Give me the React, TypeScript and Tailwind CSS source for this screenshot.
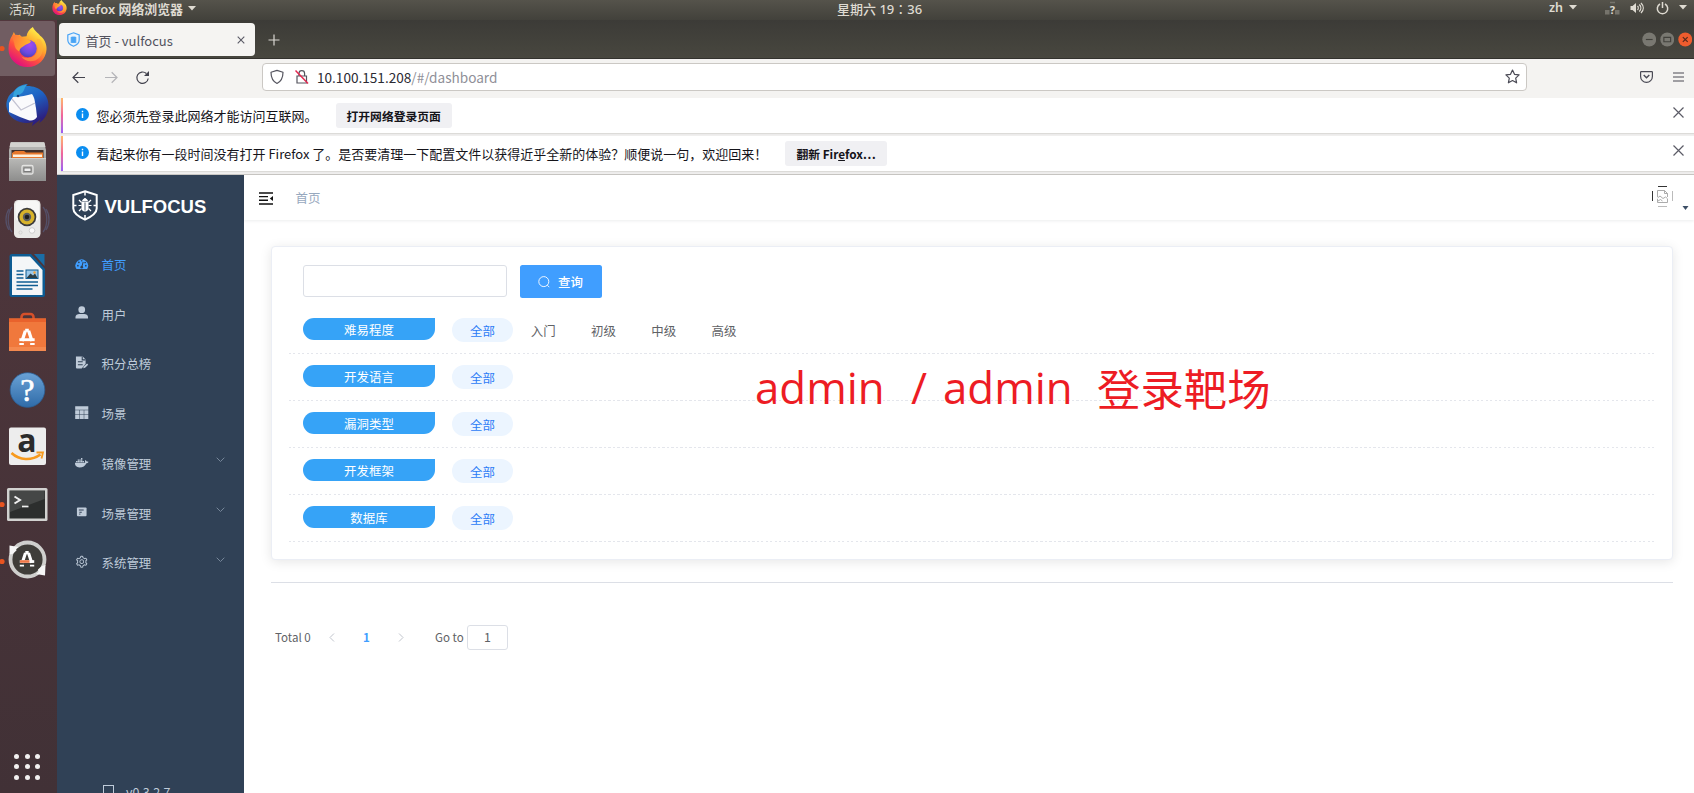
import React from "react";
import { FaDocker } from "react-icons/fa";
import { AiOutlineSetting } from "react-icons/ai";

const CJK = "font-['Noto_Sans_CJK_SC',sans-serif]";

function Caret({ className = "" }: { className?: string }) {
  return (
    <svg width="8" height="5" viewBox="0 0 8 5" className={className}>
      <path d="M0 0h8L4 4.6z" fill="currentColor" />
    </svg>
  );
}

function FirefoxMark({ size, id }: { size: number; id: string }) {
  return (
    <svg width={size} height={size} viewBox="0 0 40 41">
      <defs>
        <linearGradient id={id + "a"} x1="0.8" y1="0.1" x2="0.25" y2="0.95">
          <stop offset="0" stopColor="#fff04a" />
          <stop offset="0.35" stopColor="#ffa62b" />
          <stop offset="0.65" stopColor="#ff4f3e" />
          <stop offset="1" stopColor="#e0107e" />
        </linearGradient>
        <radialGradient id={id + "b"} cx="0.6" cy="0.3" r="0.8">
          <stop offset="0" stopColor="#a44af0" />
          <stop offset="0.6" stopColor="#6a4be0" />
          <stop offset="1" stopColor="#4a3aa8" />
        </radialGradient>
        <linearGradient id={id + "c"} x1="0" y1="0" x2="1" y2="0.3">
          <stop offset="0" stopColor="#ff7139" />
          <stop offset="1" stopColor="#ffb52b" />
        </linearGradient>
      </defs>
      <path d="M25.500 0c2 4.500 5 5.500 7.500 9 3.500 2 7 8.500 6.500 14C39 33 31 41 20 41 9 41 .5 33 .5 22.500.5 17 2 12 4.500 8.500L6 5l2 4 4-1 2 2 5-.5C19.500 5.500 22 2 25.500 0z" fill={"url(#" + id + "a)"} />
      <circle cx="20.500" cy="22" r="9" fill={"url(#" + id + "b)"} />
      <path d="M4 9c4-2 8-1 11 2 3 1.500 6 1 8.500 3.500-1 2.500-4 2.500-6 4-2 2-5.500 3-6 6.500-3-1-5-5-5-8z" fill={"url(#" + id + "c)"} />
      <path d="M29 12c3 6 3 13-1.500 17-4 3.500-10 3.500-14 1 4 6 13 7 18.500 1.500 5-5 5-14 1-19z" fill="#ffb03a" opacity=".55" />
    </svg>
  );
}

function LogoA({ x, y, s }: { x: number; y: number; s: number }) {
  return (
    <g transform={`translate(${x} ${y}) scale(${s})`} stroke="#fff" fill="none">
      <path d="M-2-7.500h4M-1.800-7-5.500 4.500M1.800-7 5.500 4.500" strokeWidth="3.600" />
      <path d="M-8.500 3H8.500" strokeWidth="3.200" />
      <path d="M-8.500 7.800h5M3.500 7.800h5" strokeWidth="2" />
    </g>
  );
}

function Tile({ children, active, dot }: { children: React.ReactNode; active?: boolean; dot?: boolean }) {
  return (
    <div className="h-[57px] w-[57px] shrink-0">
      <svg width="57" height="57" viewBox="0 0 57 57">
        {active && <rect x="-4" y="1" width="59" height="55" rx="3" fill="#715d62" />}
        {dot && <circle cx="2" cy="28.500" r="2.600" fill="#e95420" />}
        {children}
      </svg>
    </div>
  );
}

function Launcher() {
  return (
    <aside className="flex w-[57px] shrink-0 flex-col bg-linear-to-b from-[#52373d] to-[#413136]">
      <Tile active dot>
        <g transform="translate(7.500 7)"><FirefoxMark size={40} id="dock" /></g>
      </Tile>
      <Tile>
        <defs>
          <linearGradient id="tb" x1="0" y1="0" x2="0.5" y2="1">
            <stop offset="0" stopColor="#2b8fd6" />
            <stop offset="0.5" stopColor="#1e63c4" />
            <stop offset="1" stopColor="#2c1f80" />
          </linearGradient>
        </defs>
        <path d="M14 14c4-5 9-7 14-7l-3 2c14-1 23.500 8 23.500 19 0 9-4.500 15-9.500 18l2-4-9 7 1-4c-10 3-23-1-26-13-2-7 1-14 7-18z" fill="url(#tb)" />
        <path d="M14 15c3-5 8-7 13-7-3 2-2 5-5 8-3 2-6 3-8 7-1-3-1-5 0-8z" fill="#36a3dc" />
        <path d="M9 26l4-6c8 0 14-2 19-3 3 4 3 9 4 14l1 9c-3 4-6 4-9 3l-8-3-11-5z" fill="#fafafc" />
        <path d="m12 22 9 11 14-7" fill="none" stroke="#c3c3d2" strokeWidth="1.200" />
        <circle cx="18" cy="19" r="1.300" fill="#173a73" />
      </Tile>
      <Tile>
        <defs>
          <linearGradient id="fl" x1="0" y1="0" x2="0" y2="1">
            <stop offset="0" stopColor="#b9b9b7" />
            <stop offset="1" stopColor="#8f8f8e" />
          </linearGradient>
        </defs>
        <path d="M11 8h33l2 8v31H9V16z" fill="url(#fl)" />
        <path d="M10.500 8.500h34l1 4.500h-36z" fill="#d3d3d0" />
        <path d="M11.500 16h32v9h-32z" fill="#43302a" />
        <path d="M12 19l3-2h9l2 1.500h17V25H12z" fill="#e8782c" />
        <path d="M13 20.500h29V23H13z" fill="#fff0dc" />
        <path d="M9 24h37v22H9z" fill="url(#fl)" />
        <path d="M9 24.500h37" stroke="#cfcfcd" />
        <rect x="22" y="31.500" width="11" height="8.500" rx="1.500" fill="#a7a7a5" stroke="#e4e4e2" strokeWidth="1.300" />
        <rect x="24" y="34" width="7" height="3.500" fill="#eee" stroke="#666" strokeWidth=".8" />
      </Tile>
      <Tile>
        <g fill="none" stroke="#5c6a94" strokeWidth="1.300" opacity=".5">
          <path d="M12 16c-5 6-5 19 0 25M9 18c-4 6-4 15 0 21M43 16c5 6 5 19 0 25M46 18c4 6 4 15 0 21" />
        </g>
        <rect x="14" y="9" width="26.500" height="38" rx="4.500" fill="#e9e9e7" />
        <rect x="15.500" y="10" width="23.500" height="20" rx="4" fill="#f7f7f6" />
        <circle cx="27" cy="26" r="9.300" fill="#3b3b3b" />
        <circle cx="27" cy="26" r="7.600" fill="#d8b32a" />
        <circle cx="27" cy="26" r="4.200" fill="#5d5f63" />
        <circle cx="27" cy="26" r="2.300" fill="#202020" />
        <circle cx="32" cy="39.500" r="2.800" fill="#fafafa" stroke="#c5c5c5" strokeWidth=".8" />
        <circle cx="20.500" cy="41.500" r="1.600" fill="none" stroke="#ccc" strokeWidth=".7" />
      </Tile>
      <Tile>
        <path d="M12 6h19l14 15v26a2 2 0 0 1-2 2H11.500a2 2 0 0 1-2-2V8.500A2.500 2.500 0 0 1 12 6z" fill="#0d5c93" />
        <path d="M12 8.500h18L42.500 22v25H12z" fill="#f4f6f8" />
        <path d="M34 6h10.500v12z" fill="#1a6da6" />
        <path d="M16.500 23h7M16.500 26.500h7M16.500 30h7M16.500 34h21.500M16.500 37.500h21.500M16.500 41h16" stroke="#0f5d92" strokeWidth="1.700" />
        <rect x="26" y="22" width="12" height="8.500" fill="#9cc9ea" stroke="#0f5d92" />
        <path d="m26.500 30 4-4.500 2.500 2 2-2 2.500 4.500z" fill="#2c3e46" />
        <circle cx="34.500" cy="24.500" r="1.200" fill="#f2a33a" />
      </Tile>
      <Tile>
        <path d="M21.500 16v-4a3 3 0 0 1 3-3h6a3 3 0 0 1 3 3v4" fill="none" stroke="#d6502a" strokeWidth="2.600" />
        <path d="M9 13.500h37V46H9z" fill="#f0783c" />
        <path d="M9 13.500h37v3.500H9z" fill="#e9622c" />
        <path d="M9 42h37v4H9z" fill="#f4894f" />
        <LogoA x={27} y={32} s={0.9} />
      </Tile>
      <Tile>
        <defs>
          <linearGradient id="hp" x1="0" y1="0" x2="0" y2="1">
            <stop offset="0" stopColor="#6aa2d6" />
            <stop offset="1" stopColor="#2f6ba8" />
          </linearGradient>
        </defs>
        <circle cx="27.500" cy="28" r="17.300" fill="url(#hp)" stroke="#2c5f95" strokeWidth=".8" />
        <text x="27.300" y="39" textAnchor="middle" fontSize="32" fill="#fff" stroke="#fff" strokeWidth=".6" className="font-['Liberation_Serif',serif]">?</text>
      </Tile>
      <Tile>
        <rect x="9" y="8.500" width="37" height="37.500" rx="2" fill="#ededed" />
        <text x="27" y="33" textAnchor="middle" fontSize="32" fontWeight="700" fill="#2b2b2b" className="font-['Open_Sans',sans-serif]">a</text>
        <path d="M11.500 34c8 7.500 20 8 29 1.500" fill="none" stroke="#f79a1d" strokeWidth="2.600" />
        <path d="M36.500 33.500h6.500l-1.500 6" fill="none" stroke="#f79a1d" strokeWidth="1.800" />
      </Tile>
      <Tile dot>
        <rect x="7" y="12" width="40.500" height="33" rx="1.500" fill="#d2d2d0" />
        <rect x="9.500" y="14.500" width="35.500" height="28" fill="#2c2e2d" />
        <path d="M10 15h34.500v8L10 36z" fill="#454746" />
        <path d="m14.500 20.500 5.500 3.500-5.500 3.500" fill="none" stroke="#f0f0f0" strokeWidth="2" />
        <path d="M22 30.500h6.500" stroke="#f0f0f0" strokeWidth="1.700" />
      </Tile>
      <Tile dot>
        <circle cx="27.500" cy="26.500" r="17" fill="#3f3d39" stroke="#cfcfcd" strokeWidth="3.800" />
        <path d="m9.500 12.500 9 1.500-2.500 2 .5 1.500-4 3.500-3 .5z" fill="#f6f6f6" />
        <path d="m45.500 32-.5 10.500-9-1.500 2.500-2-.5-2.500 4-3.500z" fill="#f6f6f6" />
        <LogoA x={27} y={26} s={0.85} />
        <path d="M20 28.500h9.500" stroke="#f07746" strokeWidth="2.600" />
      </Tile>
      <div className="mt-auto grid grid-cols-[5px_5px_5px] gap-[5.600px] pb-[13px] pl-[14px]">
        {Array.from({ length: 9 }, (_, i) => (
          <span key={i} className="size-[5px] rounded-full bg-[#f2f0f0]" />
        ))}
      </div>
    </aside>
  );
}

function TopBar() {
  return (
    <header className="flex h-[20px] shrink-0 items-center bg-linear-to-b from-[#55534b] to-[#42413b] font-['Noto_Sans','Noto_Sans_CJK_SC',sans-serif] text-[13px] leading-[18px] text-[#dfdbd2]">
      <div className="flex w-[837px] items-center pb-[3px] pl-[9px]">
        <span className="w-[43px]">活动</span>
        <span className="pb-[2px]"><FirefoxMark size={15} id="top" /></span>
        <span className="ml-[5px] text-[12.900px] font-semibold">Firefox 网络浏览器</span>
        <Caret className="ml-[5px]" />
      </div>
      <span className="pb-[3px] font-medium">星期六 19∶36</span>
      <div className="ml-auto flex items-center pr-[2px] pb-[5px]">
        <span className="text-[12.500px] font-semibold">zh</span>
        <Caret className="ml-[6px]" />
        <svg width="15" height="15" viewBox="0 0 15 15" className="ml-[28px]">
          <path d="M0 10h4.500v4.500H0zM10 10h4.500v4.500H10z" fill="#76746c" />
          <path d="M5 2.500h5" stroke="#76746c" strokeWidth="1.500" />
          <text x="7.300" y="13.500" textAnchor="middle" fontSize="11" fontWeight="700" fill="#dfdbd2">?</text>
        </svg>
        <svg width="14" height="14" viewBox="0 0 14 14" className="ml-[10px]" fill="none" stroke="#dfdbd2" strokeWidth="1.300">
          <path d="M.5 5h2L6 2v10L2.500 9h-2z" fill="#dfdbd2" stroke="none" />
          <path d="M7.500 5c1 1 1 3 0 4M9.300 3.500c2 2 2 5 0 7M11 2c3 3 3 7 0 10" />
        </svg>
        <svg width="13" height="14" viewBox="0 0 13 14" className="ml-[12px]" fill="none" stroke="#dfdbd2" strokeWidth="1.500">
          <path d="M4 3a5.200 5.200 0 1 0 5 0M6.500 1v6" />
        </svg>
        <Caret className="mr-[5px] ml-[10px]" />
      </div>
    </header>
  );
}

function TabStrip() {
  return (
    <div className="flex h-[39px] shrink-0 items-start border-b border-[#33322e] bg-linear-to-b from-[#3c3b37] to-[#48473f]">
      <div className={"mt-[3px] ml-[2px] flex h-[33px] w-[196px] items-center rounded-[4px] bg-[#f5f4f2] pl-[8px] text-[13px] text-[#52525e] " + CJK}>
        <svg width="13" height="15" viewBox="0 0 13 15">
          <path d="M6.500.8 12.200 3v5c0 3-2.500 5-5.700 6.300C3.300 13 .8 11 .8 8V3z" fill="#e8f3fd" stroke="#4aa4f5" strokeWidth="1.200" />
          <path d="M4.500 5h4v5.500h-4zM3.300 6h6.400M3.300 8h6.400M3.300 10h6.400" fill="#4aa4f5" stroke="#4aa4f5" strokeWidth=".8" />
        </svg>
        <span className="ml-[5.500px] pt-[2px] leading-[20px]">首页 - vulfocus</span>
        <svg width="8" height="8" viewBox="0 0 8 8" className="mr-[10px] ml-auto" stroke="#5b5b66" strokeWidth="1.100"><path d="m.7.7 6.600 6.600M7.300.7.700 7.300" /></svg>
      </div>
      <svg width="12" height="12" viewBox="0 0 12 12" className="mt-[14px] ml-[13px]" stroke="#dad8d2" strokeWidth="1.200"><path d="M6 .5v11M.5 6h11" /></svg>
      <div className="mt-[12px] mr-[2px] ml-auto flex gap-[3.500px]">
        <svg width="14.500" height="15" viewBox="0 0 15 15"><circle cx="7.500" cy="7.500" r="7.200" fill="#797871" /><path d="M4 7.500h7" stroke="#42413c" strokeWidth="1.200" /></svg>
        <svg width="14.500" height="15" viewBox="0 0 15 15"><circle cx="7.500" cy="7.500" r="7.200" fill="#797871" /><path d="M4 5.300h7v4.500H4z" fill="none" stroke="#42413c" strokeWidth="1.200" /></svg>
        <svg width="14.500" height="15" viewBox="0 0 15 15"><circle cx="7.500" cy="7.500" r="7.200" fill="#ee5c2e" /><path d="m5 5 5 5m0-5-5 5" stroke="#55291c" strokeWidth="1.200" /></svg>
      </div>
    </div>
  );
}

function AddressBar() {
  return (
    <div className="flex h-[39px] shrink-0 items-center bg-[#f4f3f1] pb-[4px] text-[#4a4a55]">
      <svg width="80" height="16" viewBox="0 0 80 16" className="ml-[15px]" fill="none" stroke="#42424d" strokeWidth="1.200">
        <path d="M13 8.500H1M6.300 3.300 1 8.500l5.300 5.200" />
        <path d="M33 8.500h12M39.700 3.300 45 8.500l-5.300 5.200" stroke="#b4b4b8" />
        <path d="M76.200 9.500a5.700 5.700 0 1 1-1.800-5" />
        <path d="M77 2v5h-5z" fill="#42424d" stroke="none" />
      </svg>
      <div className="ml-[110px] flex h-[28px] w-[1265px] items-center rounded-[4px] border border-[#cbc8c4] bg-white pr-[6px] pl-[7px]">
        <svg width="40" height="16" viewBox="0 0 40 16" fill="none" stroke="#55555f" strokeWidth="1.200">
          <path d="M7 1.400 13 3.300c0 5-1.500 9-6 11.200C2.500 12.300 1 8.300 1 3.300z" strokeLinejoin="round" />
          <path d="M27 7h9.500v7H27zM29 7V4.500a2.800 2.800 0 0 1 5.600 0V7" />
          <path d="m25.500 1.500 12.500 13" stroke="#e22850" strokeWidth="1.500" />
        </svg>
        <span className={"ml-[7px] pt-px text-[13.600px] leading-[20px] text-[#2b2a33] " + CJK}>
          10.100.151.208<span className="text-[#8f8f98]">/#/dashboard</span>
        </span>
        <svg width="15" height="15" viewBox="0 0 15 15" className="ml-auto" fill="none" stroke="#4a4a55" strokeWidth="1.200" strokeLinejoin="round">
          <path d="m7.500 1 2 4.300 4.600.6-3.400 3.200.9 4.700-4.100-2.300-4.100 2.300.9-4.700L.9 5.900l4.600-.6z" />
        </svg>
      </div>
      <svg width="13" height="12" viewBox="0 0 13 12" className="ml-auto" fill="none" stroke="#4a4a55" strokeWidth="1.200">
        <path d="M1.200.700h10.600q.6 0 .6.600V5.500a5.900 5.900 0 0 1-11.800 0V1.300q0-.6.600-.6z" />
        <path d="m3.700 4 2.800 2.700L9.300 4" strokeWidth="1.400" />
      </svg>
      <svg width="11" height="10" viewBox="0 0 11 10" className="mr-[10px] ml-[20px]" stroke="#4a4a55" strokeWidth="1.200"><path d="M0 1h11M0 5h11M0 9h11" /></svg>
    </div>
  );
}

function Notice({ text, button }: { text: string; button: React.ReactNode }) {
  return (
    <div className={"mb-[3px] ml-[4px] flex h-[35px] shrink-0 items-center bg-white text-[13px] text-[#15141a] shadow-[0_1px_1px_#dcdbd8] " + CJK}>
      <span className="h-full w-[2px] bg-linear-to-b from-[#ffb765] via-[#f0649a] to-[#9a5cf5]" />
      <svg width="13" height="13" viewBox="0 0 13 13" className="mb-[3px] ml-[12.500px]">
        <circle cx="6.500" cy="6.500" r="6.500" fill="#0a8df0" />
        <path d="M6.500 5.500v4.500M6.500 2.800v1.500" stroke="#fff" strokeWidth="1.400" />
      </svg>
      <span className="ml-[8px] leading-[20px] whitespace-nowrap">{text}</span>
      <span className="ml-[18px] flex h-[25px] items-center rounded-[3px] bg-[#f0f0f3] px-[11px] pt-px text-[11.800px] font-bold whitespace-nowrap">{button}</span>
      <svg width="11" height="11" viewBox="0 0 11 11" className="mr-[10px] mb-[6px] ml-auto" stroke="#5b5b66" strokeWidth="1.200"><path d="m.5.5 10 10M10.500.5l-10 10" /></svg>
    </div>
  );
}

const icon = "h-[13.500px] w-[13.500px]";
const menu = [
  {
    label: "首页", active: true,
    icon: (
      <svg viewBox="0 0 14 14" className={icon}>
        <path d="M1.500 12.500A6.500 6.500 0 1 1 12.500 12.500z" fill="#409eff" />
        <path d="M7 10.500 8.500 5" stroke="#304156" strokeWidth="1.100" />
        <g fill="#304156"><circle cx="7" cy="10.500" r="1.400" /><circle cx="3" cy="9" r=".9" /><circle cx="4" cy="5.500" r=".9" /><circle cx="7" cy="3.800" r=".8" /><circle cx="10.500" cy="5.700" r=".9" /><circle cx="11.200" cy="9" r=".9" /></g>
      </svg>
    ),
  },
  {
    label: "用户",
    icon: (
      <svg viewBox="0 0 14 14" className={icon} fill="#bfcbd9"><circle cx="7" cy="3.800" r="3.500" /><path d="M.5 13v-1.500C.5 9.500 2.500 8.300 4.500 8.300h5c2 0 4 1.200 4 3.200V13z" /></svg>
    ),
  },
  {
    label: "积分总榜",
    icon: (
      <svg viewBox="0 0 14 14" className={icon}>
        <path d="M1 .5h7l3 3V8L7 13H2a1 1 0 0 1-1-1z" fill="#bfcbd9" />
        <path d="M7.500.5V4H11M3 6h5M3 9h5" fill="none" stroke="#304156" strokeWidth="1.100" />
        <path d="m8.500 12.800.5-2 3.500-3 1.200 1.200-3.200 3.300z" fill="#bfcbd9" />
      </svg>
    ),
  },
  {
    label: "场景",
    icon: (
      <svg viewBox="0 0 14 14" className={icon} fill="#bfcbd9"><path d="M.2.2h13.600v3.600H.200zM.2 4.300h4.200v4.200H.200zM4.900 4.300h4.200v4.200H4.900zM9.600 4.300h4.200v4.200H9.600zM.2 9h4.200v4.800H.200zM4.900 9h4.200v4.800H4.900zM9.600 9h4.200v4.800H9.600z" /></svg>
    ),
  },
  { label: "镜像管理", sub: true, icon: <FaDocker className={icon} /> },
  {
    label: "场景管理", sub: true,
    icon: (
      <svg viewBox="0 0 14 14" className={icon}><rect x="2" y="2.700" width="10" height="9" rx="1" fill="#bfcbd9" /><path d="M4 5.200h5M4.500 7.500h2.500M4.500 9.500h1" stroke="#304156" strokeWidth="1.200" /></svg>
    ),
  },
  { label: "系统管理", sub: true, icon: <AiOutlineSetting className={icon} /> },
];

function Sidebar() {
  return (
    <nav className={"flex w-[187px] shrink-0 flex-col overflow-hidden bg-[#304156] text-[12.440px] text-[#bfcbd9] " + CJK}>
      <div className="flex h-[65px] shrink-0 items-start pt-[15px] pl-[15px]">
        <svg width="26" height="31" viewBox="0 0 26 31" fill="none" stroke="#fff">
          <path d="M13 1.200 24.700 5v13.500c0 4.500-5 8-11.700 11.200C6.300 26.500 1.300 23 1.300 18.500V5z" strokeWidth="2" />
          <path d="M13 1v4.500M13 25v5M1 15.500h3.500M21.500 15.500H25" strokeWidth="1.500" />
          <path d="M9.500 11.500h7v6q0 4-3.500 4t-3.500-4z" fill="#fff" stroke="none" />
          <path d="M10.500 10.500q2.500-4 5 0z" fill="#fff" />
          <path d="M9.500 12.500 7 10M16.500 12.500 19 10M9.500 15.500H6.500M16.500 15.500h3M9.500 18.500 7 21M16.500 18.500 19 21" strokeWidth="1.200" />
          <path d="M13 12.500v8" stroke="#304156" strokeWidth=".9" />
        </svg>
        <span className="mt-[6px] ml-[6.500px] font-['Liberation_Sans',sans-serif] text-[18.500px] leading-[22px] font-bold text-white">VULFOCUS</span>
      </div>
      {menu.map((m) => (
        <div key={m.label} className={"flex h-[49.780px] shrink-0 items-center pl-[18px] " + (m.active ? "text-[#409eff]" : "")}>
          <span className="mb-[3px]">{m.icon}</span>
          <span className="ml-[13px] leading-[20px]">{m.label}</span>
          {m.sub && (
            <svg width="9" height="6" viewBox="0 0 9 6" className="mr-[19px] mb-[7px] ml-auto" fill="none" stroke="#77879a" strokeWidth="1"><path d="m.7.7 3.800 3.800L8.300.700" /></svg>
          )}
        </div>
      ))}
      <div className="mt-auto -mb-[9px] flex h-[20px] shrink-0 items-center pl-[46px]">
        <span className="h-[14px] w-[11px] border border-[#bfcbd9]" />
        <span className="ml-[12px] text-[12.440px] leading-[20px]">v0.3.2.7</span>
      </div>
    </nav>
  );
}

const filters = [
  { name: "难易程度", options: ["入门", "初级", "中级", "高级"] },
  { name: "开发语言", options: [] },
  { name: "漏洞类型", options: [] },
  { name: "开发框架", options: [] },
  { name: "数据库", options: [] },
];

function Filters() {
  return (
    <section className="mr-[21px] ml-[27px] mt-[26px] h-[314px] rounded-[4px] border border-[#ebeef5] bg-white px-[17px] pt-[18px] shadow-[0_2px_12px_rgba(0,0,0,0.1)]">
      <div className="flex items-start pl-[14px]">
        <input className="h-[32px] w-[204px] rounded-[3px] border border-[#dcdfe6] bg-white" />
        <button className="ml-[13px] flex h-[33px] w-[82px] items-center rounded-[2.500px] bg-[#409eff] pt-px pl-[18px] text-[12.440px] font-medium text-white">
          <svg width="12" height="12" viewBox="0 0 12 12" fill="none" stroke="#fff" strokeWidth=".9"><circle cx="5.800" cy="5.600" r="5" /><path d="m9.300 9.200 2 2" /></svg>
          <span className="ml-[8px]">查询</span>
        </button>
      </div>
      <div className="mt-[9px]">
        {filters.map((f) => (
          <div key={f.name} className="flex h-[47px] flex-col justify-between pt-[11px]">
            <div className="flex items-start pl-[14px] text-[12.440px]">
              <span className="flex h-[22px] w-[132px] items-center justify-center rounded-[11px] rounded-tr-none bg-[#36a3f7] pt-[2px] text-white">{f.name}</span>
              <span className="ml-[17px] flex h-[23.500px] w-[61px] items-center justify-center rounded-full bg-[#ecf5ff] pt-[3px] text-[#2d7cf6]">全部</span>
              {f.options.map((o) => (
                <span key={o} className="flex h-[24px] w-[60.300px] items-center justify-center pt-[2px] text-[#606266]">{o}</span>
              ))}
            </div>
            <div className="h-px bg-[repeating-linear-gradient(90deg,#e4e6ec_0_2px,transparent_2px_4.500px)]" />
          </div>
        ))}
      </div>
    </section>
  );
}

function Pagination() {
  return (
    <div className="mt-[41px] ml-[31px] flex h-[26px] items-center text-[11.560px] text-[#606266]">
      <span className="w-[54px] pt-px">Total 0</span>
      <svg width="6" height="9" viewBox="0 0 6 9" fill="none" stroke="#c0c4cc"><path d="M5 .5 1 4.500l4 4" /></svg>
      <span className="w-[63px] pt-px text-center font-bold text-[#409eff]">1</span>
      <svg width="6" height="9" viewBox="0 0 6 9" fill="none" stroke="#c0c4cc"><path d="m1 .5 4 4-4 4" /></svg>
      <span className="ml-[31px] w-[32px] pt-px">Go to</span>
      <span className="flex h-[25px] w-[41px] items-center justify-center rounded-[3px] border border-[#dcdfe6] text-[12.440px]">1</span>
    </div>
  );
}

function MainPane() {
  return (
    <main className={"relative flex min-w-0 flex-1 flex-col bg-white " + CJK}>
      <div className="flex h-[45px] shrink-0 items-center pl-[15px] shadow-[0_1px_3px_rgba(0,21,41,0.08)]">
        <svg width="14" height="13" viewBox="0 0 14 13" className="mt-[1px]" stroke="#111" strokeWidth="1.400">
          <path d="M0 1h14M0 4.600h9M0 8.300h9M0 12h14" /><path d="M14 4v5l-3.200-2.500z" fill="#111" stroke="none" />
        </svg>
        <span className="ml-[22.500px] text-[12.440px] leading-[20px] text-[#97a8be]">首页</span>
        <svg width="38" height="26" viewBox="0 0 38 26" className="mr-[5px] ml-auto" fill="none">
          <path d="M1.500 6v10M7 1.500h9" stroke="#333" strokeWidth="1" />
          <path d="M21.500 6v10M7 21.500h9" stroke="#bbb" strokeWidth="1" />
          <path d="M6.500 12V5.500h7l3 3V12M13.500 5.500v3h3M6.500 14v3.500h10V14M6.500 13l2.500-2 3 2.500 2.500-1.500 2 1.500M7 16l2.500-1.500 2 1.500" stroke="#a3a3a3" strokeWidth=".9" />
          <path d="M31.500 21h6l-3 4z" fill="#3d4f66" />
        </svg>
      </div>
      <Filters />
      <div className="mr-[21px] ml-[27px] mt-[22px] h-px bg-[#dcdfe6]" />
      <Pagination />
      <div className="absolute top-[182px] left-[511px] flex items-center text-[43.800px] leading-[60px] whitespace-pre text-[#ed1c24]">
        <span className="w-[156px] font-['Open_Sans',sans-serif]">admin</span>
        <span className="w-[32px] font-['Open_Sans',sans-serif]">/</span>
        <span className="w-[154px] font-['Open_Sans',sans-serif]">admin</span>
        <span className="text-[43.400px]">登录靶场</span>
      </div>
    </main>
  );
}

export default function App() {
  return (
    <div className="flex h-[793px] w-[1694px] flex-col overflow-hidden bg-white">
      <TopBar />
      <div className="flex min-h-0 flex-1">
        <Launcher />
        <div className="flex min-w-0 flex-1 flex-col bg-[#f0efee]">
          <TabStrip />
          <AddressBar />
          <Notice text="您必须先登录此网络才能访问互联网。" button="打开网络登录页面" />
          <Notice text="看起来你有一段时间没有打开 Firefox 了。是否要清理一下配置文件以获得近乎全新的体验？顺便说一句，欢迎回来！" button={<span>翻新 Fir<u>e</u>fox…</span>} />
          <div className="flex min-h-0 flex-1 border-t border-[#c9c7c4]">
            <Sidebar />
            <MainPane />
          </div>
        </div>
      </div>
    </div>
  );
}
